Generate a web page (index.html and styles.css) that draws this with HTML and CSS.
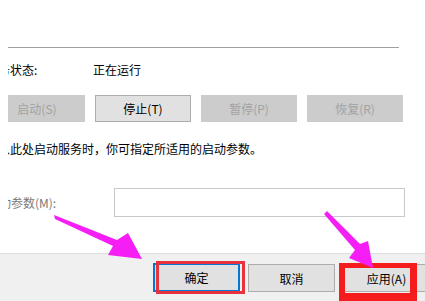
FILE: index.html
```html
<!DOCTYPE html>
<html lang="zh-CN">
<head>
<meta charset="utf-8">
<link rel="stylesheet" href="styles.css">
</head>
<body>
<div class="page">
  <div class="content">
    <div class="rule"></div>
    <div class="status-row">
      <span class="label">服务状态:</span>
      <span class="value">正在运行</span>
    </div>
    <div class="svc-buttons">
      <button class="btn disabled">启动(S)</button>
      <button class="btn">停止(T)</button>
      <button class="btn disabled">暂停(P)</button>
      <button class="btn disabled">恢复(R)</button>
    </div>
    <p class="desc">当从此处启动服务时，你可指定所适用的启动参数。</p>
    <div class="params-row">
      <span class="label muted">启动参数(M):</span>
      <div class="input"></div>
    </div>
  </div>
  <div class="footer">
    <button class="btn fbtn default">确定</button>
    <button class="btn fbtn">取消</button>
    <button class="btn fbtn">应用(A)</button>
  </div>

  <div class="hl hl-ok"></div>
  <div class="hl hl-apply"></div>
  <svg class="arrows" width="425" height="301" viewBox="0 0 425 301">
    <polygon points="54,215 117,240 128,233 142,259 108,255 113,246 55,219" fill="#f51ef5"/>
    <polygon points="327,211 360,244 368,241 373,268 349,258 355,250 324,214" fill="#f51ef5"/>
  </svg>
</div>
</body>
</html>
```
FILE: styles.css
```css
html, body {
  margin: 0;
  padding: 0;
  background: #ffffff;
}

.page {
  position: relative;
  width: 425px;
  height: 301px;
  overflow: hidden;
  display: flex;
  flex-direction: column;
  font-family: "Noto Sans CJK SC", "Microsoft YaHei", sans-serif;
  font-size: 12px;
  color: #000;
  background: #fff;
}

.content {
  height: 253px;
  margin-left: 8px;
  overflow: hidden;
  box-sizing: border-box;
}

.rule {
  height: 1px;
  background: #a0a0a0;
  margin-top: 47px;
  width: 391px;
}

.status-row {
  display: grid;
  grid-template-columns: 107px auto;
  margin-left: -22px;
  margin-top: 14px;
  line-height: 16px;
}

.svc-buttons {
  display: flex;
  gap: 10px;
  margin-left: -19px;
  margin-top: 17px;
}

.btn {
  font-family: inherit;
  font-size: 12px;
  color: #000;
  background: #e1e1e1;
  border: 1px solid #adadad;
  padding: 0;
  margin: 0;
  box-sizing: border-box;
}

.svc-buttons .btn {
  width: 96px;
  height: 27px;
}

.btn.disabled {
  background: #cccccc;
  border-color: #cccccc;
  color: #a2a2a2;
}

.desc {
  margin: 19px 0 0 -22px;
  line-height: 16px;
  white-space: nowrap;
}

.params-row {
  display: grid;
  grid-template-columns: 127px 291px;
  align-items: center;
  margin-left: -21px;
  margin-top: 31px;
}

.muted {
  color: #7a7a7a;
}

.input {
  height: 29px;
  box-sizing: border-box;
  border: 1px solid #c8c8c8;
  background: #fff;
}

.footer {
  flex: 1;
  background: #f0f0f0;
  border-top: 1px solid #dfdfdf;
  display: flex;
  gap: 8px;
  padding: 10px 0 0 153px;
  box-sizing: border-box;
}

.fbtn {
  flex: none;
  width: 87px;
  height: 28px;
}

.fbtn.default {
  border: 2px solid #0078d7;
  height: 29px;
  margin-top: -1px;
}

.hl {
  position: absolute;
  box-sizing: border-box;
  pointer-events: none;
}

.hl-ok {
  left: 156px;
  top: 261px;
  width: 89px;
  height: 33px;
  border: 3px solid #e6333d;
}

.hl-apply {
  left: 339px;
  top: 263px;
  width: 78px;
  height: 40px;
  border-style: solid;
  border-color: #f41c1c;
  border-width: 5px 7px 10px 6px;
}

.arrows {
  position: absolute;
  left: 0;
  top: 0;
  pointer-events: none;
}
```
